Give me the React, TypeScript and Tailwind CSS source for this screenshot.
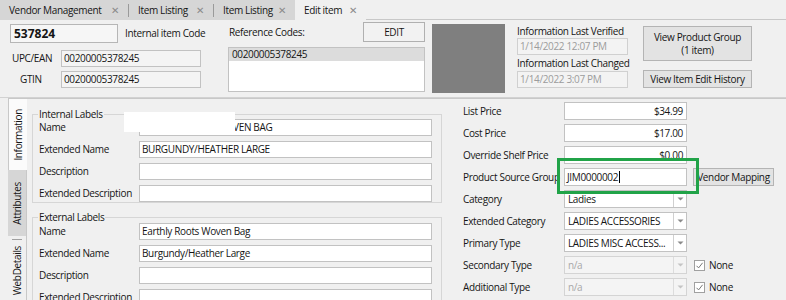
import React from "react";

const lbl = "text-[10px] leading-[13px] text-[#151515] whitespace-nowrap";

function Tab({ label, active, w, sep }: { label: string; active?: boolean; w: string; sep?: boolean }) {
  return (
    <div className={`flex items-center h-[20px] ${w} ${active ? "bg-[#f0f0f0]" : "bg-[#d6d6d6]"}`}>
      <span className={`pl-[9px] ${lbl}`}>{label}</span>
      <span className="ml-auto mr-[9px] text-[10px] text-[#8a8a8a]">✕</span>
      {sep && <span className="w-[1px] h-[13px] bg-[#9a9a9a]" />}
    </div>
  );
}

function Input({ w, children, right, disabled, bg }: { w: string; children?: React.ReactNode; right?: boolean; disabled?: boolean; bg?: string }) {
  return (
    <div
      className={`${w} h-[17px] shrink-0 border ${disabled ? "border-[#d0d0d0] text-[#9c9c9c]" : "border-[#c2c2c2] text-[#151515]"} ${bg ?? "bg-white"} flex items-center ${right ? "justify-end pr-[3px]" : "pl-[2px]"} text-[10px] leading-[13px] whitespace-nowrap overflow-hidden`}
    >
      {children}
    </div>
  );
}

function Drop({ value, disabled }: { value: string; disabled?: boolean }) {
  return (
    <div className={`w-[123px] h-[18px] shrink-0 border ${disabled ? "border-[#d4d4d4] bg-[#f4f4f4] text-[#a8a8a8]" : "border-[#c2c2c2] bg-white text-[#151515]"} flex items-center text-[10px] leading-[13px]`}>
      <span className="pl-[3px] flex-1 whitespace-nowrap overflow-hidden">{value}</span>
      <span className={`w-[13px] h-full border-l ${disabled ? "border-[#dcdcdc]" : "border-[#d0d0d0]"} flex items-center justify-center`}>
        <svg width="7" height="4" viewBox="0 0 7 4"><path d="M0.5 0.5 L3.5 3.5 L6.5 0.5 Z" fill={disabled ? "#c4c4c4" : "#8a8a8a"} /></svg>
      </span>
    </div>
  );
}

function Row({ label, children }: { label: string; children: React.ReactNode }) {
  return (
    <div className="flex items-center h-[17px]">
      <span className={`w-[106px] pl-[6px] ${lbl}`}>{label}</span>
      {children}
    </div>
  );
}

function RRow({ label, children }: { label: string; children: React.ReactNode }) {
  return (
    <div className="flex items-center h-[18px]">
      <span className={`w-[101px] ${lbl}`}>{label}</span>
      {children}
    </div>
  );
}

function Check() {
  return (
    <div className="ml-[7px] flex items-center">
      <span className="w-[11px] h-[11px] border border-[#a0a0a0] bg-white flex items-center justify-center">
        <svg width="9" height="9" viewBox="0 0 9 9"><path d="M1.5 4.8 L3.6 6.9 L7.6 1.8" stroke="#777" strokeWidth="1" fill="none" /></svg>
      </span>
      <span className={`ml-[4px] ${lbl}`}>None</span>
    </div>
  );
}

export default function App() {
  return (
    <div className="w-[786px] h-[300px] overflow-hidden bg-[#f0f0f0] relative font-['Open_Sans',sans-serif] font-medium tracking-[-0.35px] text-[#151515]">
      {/* tab bar */}
      <div className="flex h-[20px]">
        <Tab label="Vendor Management" w="w-[129px]" sep />
        <Tab label="Item Listing" w="w-[85px]" sep />
        <Tab label="Item Listing" w="w-[81px]" />
        <Tab label="Edit item" w="w-[71px]" active />
        <div className="flex-1 border-b border-[#c8c8c8]" />
      </div>

      {/* top section */}
      <div className="flex h-[78px] border-b border-[#d2d2d2]">
        <div className="ml-[10px] w-[191px] pt-[4px] flex flex-col">
          <div className="flex items-center h-[19px]">
            <div className="w-[108px] h-[19px] shrink-0 border border-[#b6b6b6] bg-[#f6f6f6] flex items-center pl-[3px] text-[12px] font-bold tracking-normal">537824</div>
            <span className={`ml-[7px] ${lbl}`}>Internal item Code</span>
          </div>
          <div className="flex items-center mt-[7px]">
            <span className={`w-[51px] pl-[2px] ${lbl}`}>UPC/EAN</span>
            <Input w="w-[140px]" bg="bg-[#f4f4f4]">00200005378245</Input>
          </div>
          <div className="flex items-center mt-[4px]">
            <span className={`w-[51px] pl-[10px] ${lbl}`}>GTIN</span>
            <Input w="w-[140px]" bg="bg-[#f4f4f4]">00200005378245</Input>
          </div>
        </div>

        <div className="ml-[27px] w-[197px] pt-[2px] flex flex-col">
          <div className="flex items-center justify-between h-[20px]">
            <span className={`pl-[1px] ${lbl}`}>Reference Codes:</span>
            <div className="w-[62px] h-[20px] border border-[#b0b0b0] bg-[#f2f2f2] flex items-center justify-center text-[10px]">EDIT</div>
          </div>
          <div className="mt-[5px] h-[45px] border border-[#c2c2c2] bg-white">
            <div className="h-[13px] bg-[#dcdcdc] pl-[3px] text-[10px] leading-[13px]">00200005378245</div>
          </div>
        </div>

        <div className="ml-[7px] mt-[4px] w-[73px] h-[69px] bg-[#7f7f7f]" />

        <div className="ml-[12px] w-[111px] pt-[5px] flex flex-col">
          <span className={lbl}>Information Last Verified</span>
          <Input w="w-[111px]" disabled bg="bg-[#f3f3f3]">1/14/2022 12:07 PM</Input>
          <span className={`mt-[2px] ${lbl}`}>Information Last Changed</span>
          <div className="mt-[1px]">
            <Input w="w-[111px]" disabled bg="bg-[#f3f3f3]">1/14/2022 3:07 PM</Input>
          </div>
        </div>

        <div className="ml-[15px] w-[109px] pt-[6px] flex flex-col">
          <div className="h-[35px] border border-[#b4b4b4] bg-[#e3e3e3] flex flex-col items-center justify-center text-[10px] leading-[13px]">
            <span>View Product Group</span>
            <span>(1 item)</span>
          </div>
          <div className="mt-[9px] h-[18px] border border-[#b4b4b4] bg-[#e3e3e3] flex items-center justify-center text-[10px] whitespace-nowrap">View Item Edit History</div>
        </div>
      </div>

      {/* main area */}
      <div className="flex ml-[8px] border-t border-[#c8c8c8] h-[203px]">
        <div className="w-[19px] flex flex-col shrink-0">
          <div className="h-[71px] bg-[#fbfbfb] border-l border-[#c8c8c8] flex items-center justify-center">
            <span className={`[writing-mode:vertical-rl] rotate-180 ${lbl}`}>Information</span>
          </div>
          <div className="h-[66px] bg-[#d6d6d6] border-r border-[#c8c8c8] flex items-center justify-center">
            <span className={`[writing-mode:vertical-rl] rotate-180 ${lbl}`}>Attributes</span>
          </div>
          <div className="flex-1 border-r border-[#c8c8c8] flex flex-col items-center">
            <span className="mt-[3px] w-[10px] h-[1px] bg-[#a0a0a0]" />
            <span className={`mt-[6px] [writing-mode:vertical-rl] rotate-180 ${lbl}`}>WebDetails</span>
          </div>
        </div>

        <div className="flex pl-[5px]">
          <div className="w-[410px] flex flex-col">
            <div className="mt-[15px] h-[95px] border border-[#d6d6d6] flex flex-col">
              <span className={`self-start ml-[5px] -mt-[7px] px-[1px] bg-[#f0f0f0] ${lbl}`}>Internal Labels</span>
              <div className="-mt-[2px] flex flex-col gap-[5px]">
                <Row label="Name"><Input w="w-[293px]">EARTHLY ROOTS WOVEN BAG</Input></Row>
                <Row label="Extended Name"><Input w="w-[293px]">BURGUNDY/HEATHER LARGE</Input></Row>
                <Row label="Description"><Input w="w-[293px]" /></Row>
                <Row label="Extended Description"><Input w="w-[293px]" /></Row>
              </div>
            </div>
            <div className="mt-[14px] h-[95px] border border-[#d6d6d6] flex flex-col">
              <span className={`self-start ml-[5px] -mt-[7px] px-[1px] bg-[#f0f0f0] ${lbl}`}>External Labels</span>
              <div className="-mt-[1px] flex flex-col gap-[5px]">
                <Row label="Name"><Input w="w-[293px]">Earthly Roots Woven Bag</Input></Row>
                <Row label="Extended Name"><Input w="w-[293px]">Burgundy/Heather Large</Input></Row>
                <Row label="Description"><Input w="w-[293px]" /></Row>
                <Row label="Extended Description"><Input w="w-[293px]" /></Row>
              </div>
            </div>
          </div>

          <div className="ml-[21px] pt-[3px] flex flex-col gap-[4px]">
            <RRow label="List Price"><Input w="w-[123px] !h-[18px]" right>$34.99</Input></RRow>
            <RRow label="Cost Price"><Input w="w-[123px] !h-[18px]" right>$17.00</Input></RRow>
            <RRow label="Override Shelf Price"><Input w="w-[123px] !h-[18px]" right>$0.00</Input></RRow>
            <RRow label="Product Source Group">
              <Input w="w-[123px] !h-[18px]">JIM0000002<span className="w-[1px] h-[12px] bg-black ml-[1px]" /></Input>
              <div className="ml-[6px] w-[81px] h-[18px] border border-[#b4b4b4] bg-[#e3e3e3] flex items-center justify-center text-[10px] whitespace-nowrap">Vendor Mapping</div>
            </RRow>
            <RRow label="Category"><Drop value="Ladies" /></RRow>
            <RRow label="Extended Category"><Drop value="LADIES ACCESSORIES" /></RRow>
            <RRow label="Primary Type"><Drop value="LADIES MISC ACCESS..." /></RRow>
            <RRow label="Secondary Type"><Drop value="n/a" disabled /><Check /></RRow>
            <RRow label="Additional Type"><Drop value="n/a" disabled /><Check /></RRow>
          </div>
        </div>
      </div>

      {/* redaction overlay */}
      <div className="absolute left-[124px] top-[112px] w-[111px] h-[20px] bg-white" />
      {/* highlight overlay */}
      <div className="absolute left-[557px] top-[158px] w-[142px] h-[36px] border-[3px] border-[#21a348]" />
    </div>
  );
}
